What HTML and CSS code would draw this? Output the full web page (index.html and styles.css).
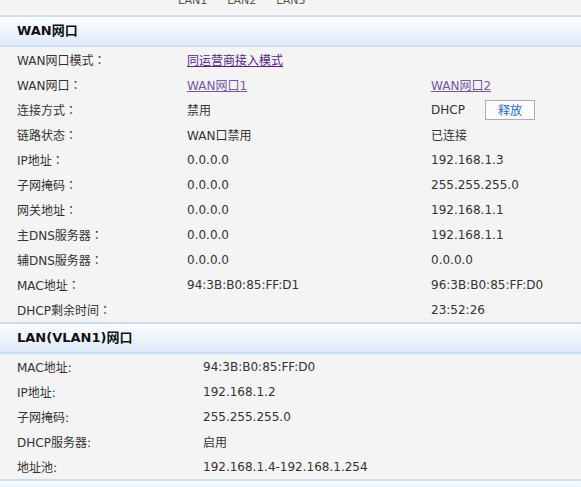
FILE: index.html
```html
<!DOCTYPE html>
<html>
<head>
<meta charset="utf-8">
<link rel="stylesheet" href="styles.css">
</head>
<body>
<div class="strip">
  <div class="ports"><span>LAN1</span><span>LAN2</span><span>LAN3</span></div>
</div>
<div class="head">WAN网口</div>
<div class="wan">
  <div class="row"><span class="lbl">WAN网口模式<span class="colon">：</span></span><span><a class="link dark" href="#">同运营商接入模式</a></span><span></span></div>
  <div class="row"><span class="lbl">WAN网口<span class="colon">：</span></span><span><a class="link" href="#">WAN网口1</a></span><span><a class="link" href="#">WAN网口2</a></span></div>
  <div class="row"><span class="lbl">连接方式<span class="colon">：</span></span><span>禁用</span><span class="withbtn">DHCP<button class="btn">释放</button></span></div>
  <div class="row"><span class="lbl">链路状态<span class="colon">：</span></span><span>WAN口禁用</span><span>已连接</span></div>
  <div class="row"><span class="lbl">IP地址<span class="colon">：</span></span><span>0.0.0.0</span><span>192.168.1.3</span></div>
  <div class="row"><span class="lbl">子网掩码<span class="colon">：</span></span><span>0.0.0.0</span><span>255.255.255.0</span></div>
  <div class="row"><span class="lbl">网关地址<span class="colon">：</span></span><span>0.0.0.0</span><span>192.168.1.1</span></div>
  <div class="row"><span class="lbl">主DNS服务器<span class="colon">：</span></span><span>0.0.0.0</span><span>192.168.1.1</span></div>
  <div class="row"><span class="lbl">辅DNS服务器<span class="colon">：</span></span><span>0.0.0.0</span><span>0.0.0.0</span></div>
  <div class="row"><span class="lbl">MAC地址<span class="colon">：</span></span><span>94:3B:B0:85:FF:D1</span><span>96:3B:B0:85:FF:D0</span></div>
  <div class="row"><span class="lbl">DHCP剩余时间<span class="colon">：</span></span><span></span><span>23:52:26</span></div>
</div>
<div class="head">LAN(VLAN1)网口</div>
<div class="lan">
  <div class="row"><span class="lbl">MAC地址:</span><span>94:3B:B0:85:FF:D0</span></div>
  <div class="row"><span class="lbl">IP地址:</span><span>192.168.1.2</span></div>
  <div class="row"><span class="lbl">子网掩码:</span><span>255.255.255.0</span></div>
  <div class="row"><span class="lbl">DHCP服务器:</span><span>启用</span></div>
  <div class="row"><span class="lbl">地址池:</span><span>192.168.1.4-192.168.1.254</span></div>
</div>
<div class="head tail"></div>
</body>
</html>
```
FILE: styles.css
```css
html, body {
  margin: 0;
  padding: 0;
  background: #f4f4f4;
  font-family: "DejaVu Sans", Verdana, "Noto Sans CJK SC", sans-serif;
  font-size: 12px;
  color: #333;
  overflow: hidden;
}
.strip {
  height: 15px;
  overflow: hidden;
}
.ports {
  display: flex;
  gap: 20px;
  padding-left: 178px;
  margin-top: -7px;
  font-size: 11px;
  color: #555;
  line-height: 16px;
}
.head {
  height: 28px;
  border-top: 2px solid #c9def3;
  border-bottom: 2px solid #c9def3;
  background: linear-gradient(to bottom, #fafcff 0%, #eef5fd 50%, #dde9f7 100%);
  padding-left: 17px;
  line-height: 28px;
  font-weight: bold;
  font-size: 13px;
  color: #111;
}
.tail {
  height: 10px;
}
.row {
  display: grid;
  height: 25px;
  align-items: center;
  padding-left: 17px;
}
.colon {
  font-family: "Noto Sans CJK TC", sans-serif;
}
.wan .row {
  grid-template-columns: 170px 244px 1fr;
}
.lan .row {
  grid-template-columns: 186px 1fr;
}
.link {
  color: #7656a8;
  text-decoration: underline;
}
.link.dark {
  color: #54258c;
}
.withbtn {
  display: flex;
  align-items: center;
}
.btn {
  margin-left: 20px;
  width: 50px;
  height: 20px;
  border: 1px solid #adadad;
  background: #fbfbfb;
  color: #1a6be0;
  font-family: "DejaVu Sans", "Noto Sans CJK SC", sans-serif;
  font-size: 12px;
  padding: 0;
}
```
